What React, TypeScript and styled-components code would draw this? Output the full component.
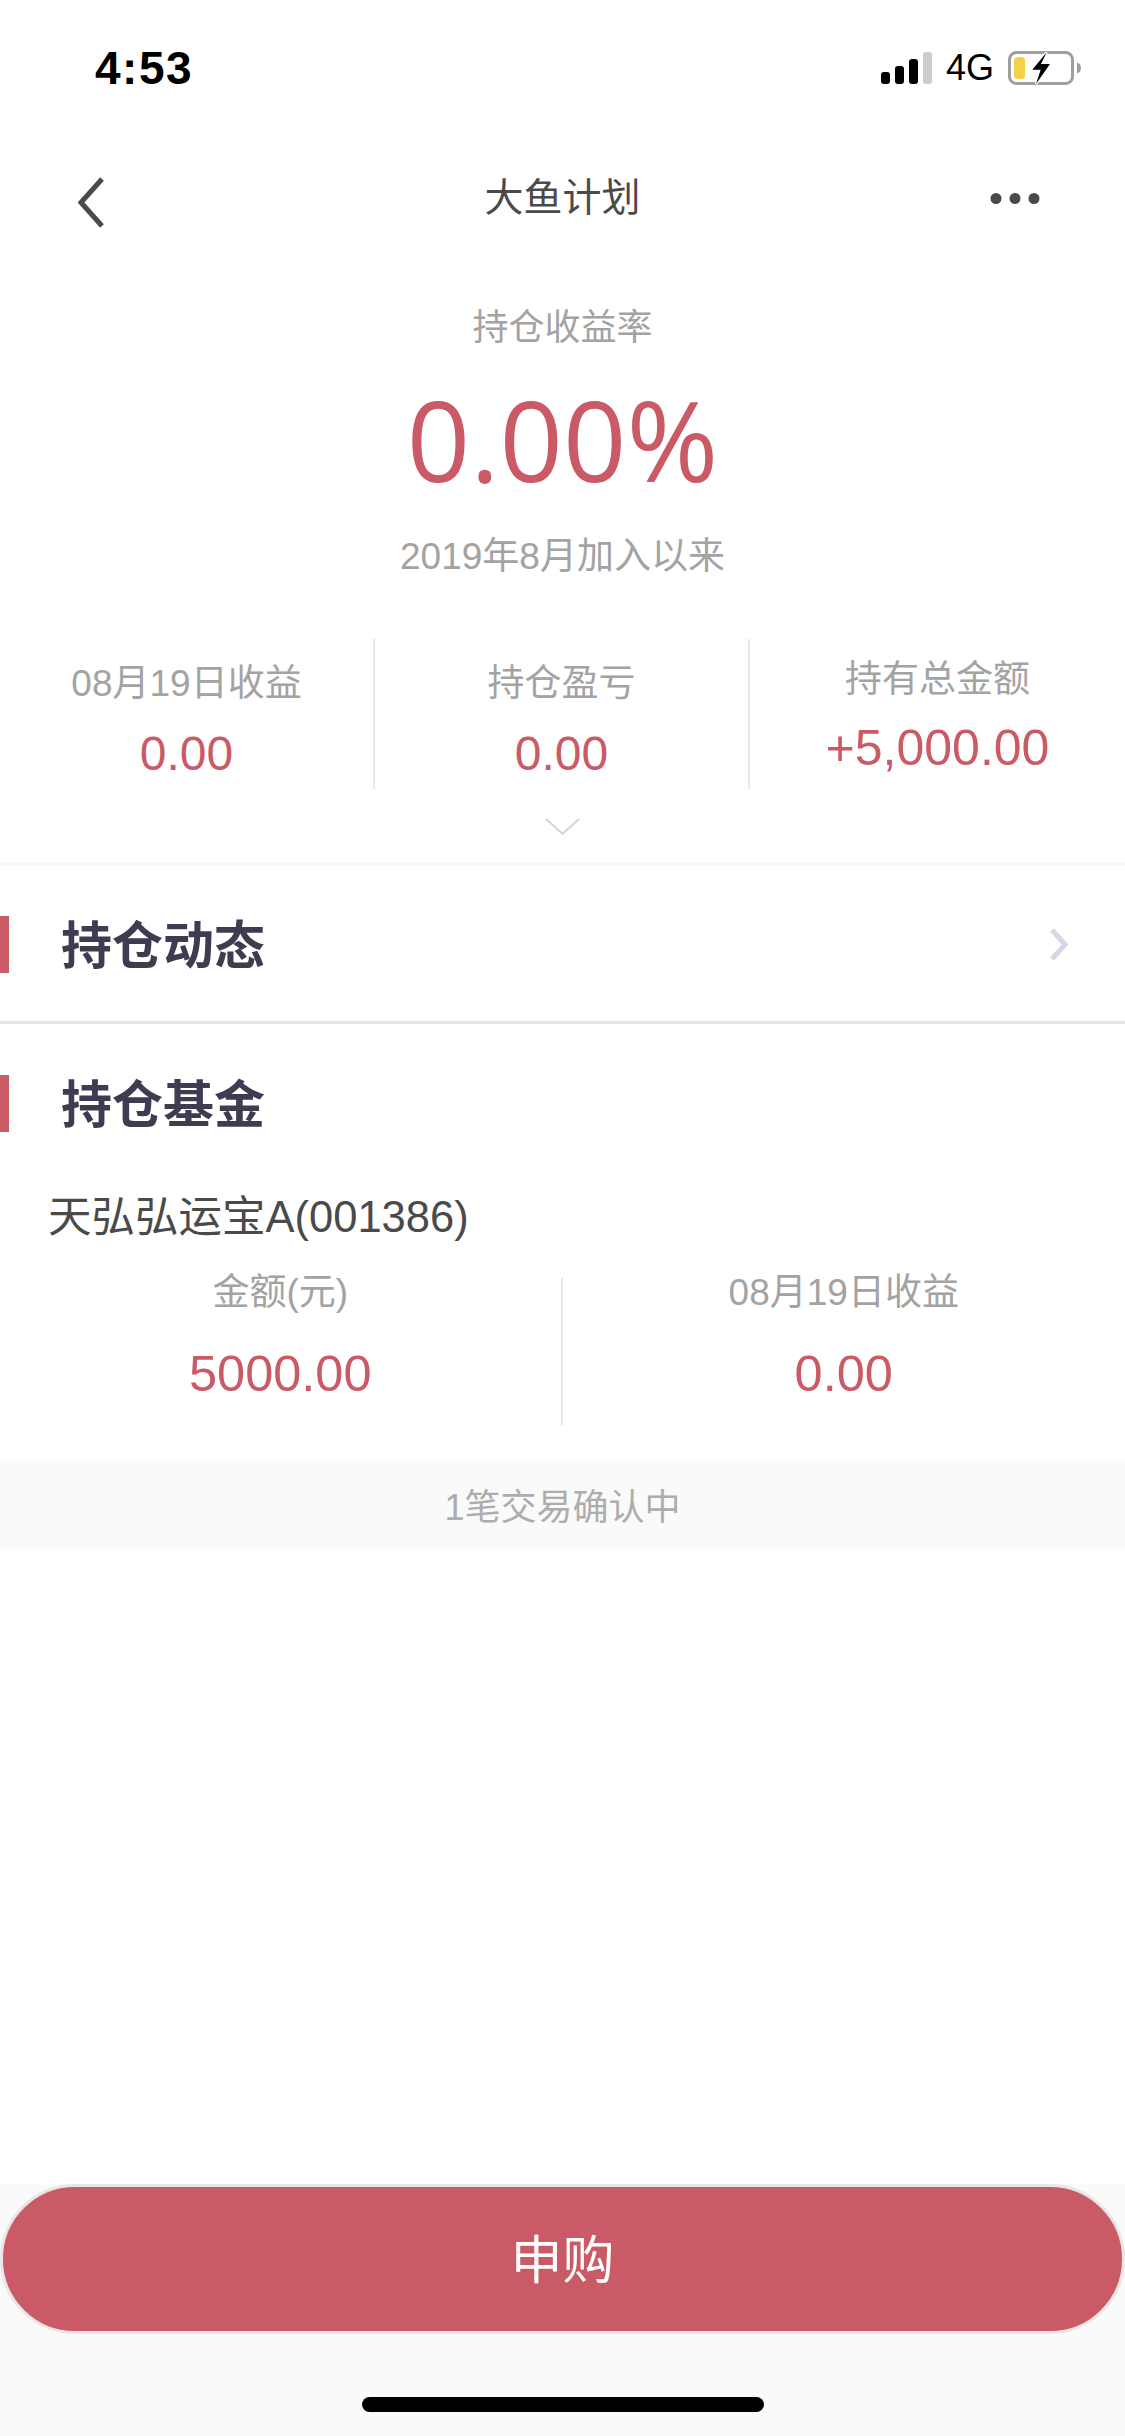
import React from 'react';
import styled, { createGlobalStyle } from 'styled-components';

const GlobalStyle = createGlobalStyle`
  html, body {
    margin: 0;
    padding: 0;
    background: #fff;
  }
  * {
    box-sizing: border-box;
  }
`;

const SANS = '"Liberation Sans", "Noto Sans CJK SC", sans-serif';
const RED = '#c95a66';

const Page = styled.div`
  width: 1125px;
  height: 2436px;
  display: flex;
  flex-direction: column;
  background: #fff;
  font-family: ${SANS};
  overflow: hidden;
`;

const StatusBar = styled.div`
  height: 110px;
  padding: 48px 44px 22px 95px;
  display: flex;
  justify-content: space-between;
  align-items: center;
`;

const Clock = styled.span`
  font-size: 46px;
  line-height: 40px;
  font-weight: 700;
  letter-spacing: 1.5px;
  color: #000;
`;

const StatusIcons = styled.div`
  display: flex;
  align-items: center;
  gap: 14px;
`;

const NetworkLabel = styled.span`
  font-size: 36px;
  line-height: 40px;
  color: #000;
`;

const NavBar = styled.div`
  height: 180px;
  padding: 0 85px;
  display: grid;
  grid-template-columns: 1fr auto 1fr;
  align-items: center;
`;

const NavTitle = styled.span`
  font-size: 39px;
  line-height: 44px;
  padding-bottom: 5px;
  color: #4a4a4a;
`;

const NavEnd = styled.div`
  display: flex;
  justify-content: flex-end;
  padding-bottom: 3px;
`;

const BackGlyph = styled.svg`
  display: block;
  margin: 5px 0 0 -8px;
`;

const Hero = styled.div`
  display: flex;
  flex-direction: column;
  align-items: center;
`;

const HeroLabel = styled.div`
  font-size: 36px;
  line-height: 76px;
  color: #a3a3a3;
`;

const HeroValue = styled.div`
  font-family: "Open Sans", ${SANS};
  font-size: 111px;
  line-height: 146px;
  color: ${RED};
`;

const HeroNote = styled.div`
  font-size: 37px;
  line-height: 90px;
  color: #a3a3a3;
`;

const StatGrid = styled.div<{ $columns: number }>`
  display: grid;
  grid-template-columns: repeat(${props => props.$columns}, 1fr);
`;

const Stats = styled(StatGrid)`
  margin-top: 37px;
  height: 150px;
`;

const FundStats = styled(StatGrid)`
  margin-top: 24px;
  height: 147px;
`;

const StatCell = styled.div<{ $top: number; $rule?: boolean }>`
  display: flex;
  flex-direction: column;
  align-items: center;
  padding-top: ${props => props.$top}px;
  border-right: ${props => (props.$rule ? '2px solid #e8e8e8' : 'none')};
`;

const StatLabel = styled.div<{ $height: number }>`
  font-size: 37px;
  line-height: ${props => props.$height}px;
  color: #a3a3a3;
  white-space: nowrap;
`;

const StatValue = styled.div<{ $gap: number; $size: number }>`
  font-size: ${props => props.$size}px;
  line-height: 60px;
  margin-top: ${props => props.$gap}px;
  color: ${RED};
  white-space: nowrap;
`;

const Expand = styled.div`
  height: 76px;
  padding-top: 29px;
  display: flex;
  justify-content: center;
  align-items: flex-start;
  border-bottom: 2px solid #f6f6f6;
`;

const SectionRow = styled.div<{ $ruled?: boolean }>`
  height: ${props => (props.$ruled ? 159 : 156)}px;
  display: flex;
  align-items: center;
  padding: 2px 57px 0 0;
  border-bottom: ${props => (props.$ruled ? '3px solid #e4e4ec' : 'none')};
`;

const SectionMark = styled.span`
  width: 9px;
  height: 57px;
  background: ${RED};
`;

const SectionTitle = styled.h2`
  flex: 1;
  margin: 0 0 0 52px;
  padding-top: 6px;
  font-size: 51px;
  line-height: 60px;
  font-weight: 700;
  color: #3f3c52;
`;

const FundName = styled.div`
  padding-left: 48px;
  font-size: 43.500px;
  line-height: 74px;
  color: #4a4a4a;
`;

const PendingBanner = styled.div`
  margin-top: 36px;
  height: 90px;
  padding-bottom: 5px;
  display: flex;
  align-items: center;
  justify-content: center;
  background: #fafafa;
  font-size: 36px;
  color: #adadad;
`;

const Spacer = styled.div`
  flex: 1;
`;

const Footer = styled.div`
  height: 252px;
  display: flex;
  flex-direction: column;
  align-items: center;
  background: #fafafa;
`;

const BuyButton = styled.button`
  width: 1125px;
  height: 150px;
  padding: 0 0 6px;
  border: 3px solid #e8e6e6;
  border-radius: 75px;
  background: ${RED};
  font-family: ${SANS};
  font-size: 52px;
  color: #fff;
`;

const HomeIndicator = styled.div`
  width: 402px;
  height: 15px;
  margin-top: 63px;
  border-radius: 8px;
  background: #000;
`;

const SignalIcon = () => (
  <svg width="51" height="32" viewBox="0 0 51 32">
    <rect x="0" y="20" width="9" height="12" rx="3" fill="#000" />
    <rect x="14" y="14" width="9" height="18" rx="3" fill="#000" />
    <rect x="28" y="7" width="9" height="25" rx="3" fill="#000" />
    <rect x="42" y="0" width="9" height="32" rx="3" fill="#ccc" />
  </svg>
);

const BatteryIcon = () => (
  <svg width="73" height="34" viewBox="0 0 73 34">
    <rect x="1.500" y="1.500" width="63" height="31" rx="7" fill="none" stroke="#9e9e9e" strokeWidth="3" />
    <path d="M69 11.500c2.500 .8 4 3 4 5.500s-1.500 4.700-4 5.500z" fill="#9e9e9e" />
    <rect x="6" y="6" width="11" height="22" rx="3.500" fill="#f8d048" />
    <path
      d="M38.700 1.300L24.300 18.700H32.700L28 33L42 13H33Z"
      fill="#000"
      stroke="#fff"
      strokeWidth="2.500"
      paintOrder="stroke"
    />
  </svg>
);

const BackIcon = () => (
  <BackGlyph width="29" height="53" viewBox="0 0 29 53">
    <path d="M25 3L4 26.500 25 50" fill="none" stroke="#4a4a4a" strokeWidth="5" />
  </BackGlyph>
);

const MoreIcon = () => (
  <svg width="50" height="13" viewBox="0 0 50 13">
    <circle cx="6" cy="6.500" r="5.500" fill="#4a4a4a" />
    <circle cx="25" cy="6.500" r="5.500" fill="#4a4a4a" />
    <circle cx="44" cy="6.500" r="5.500" fill="#4a4a4a" />
  </svg>
);

const ExpandIcon = () => (
  <svg width="35" height="18" viewBox="0 0 35 18">
    <path d="M1 1l16.500 15L34 1" fill="none" stroke="#d4d4d4" strokeWidth="2" />
  </svg>
);

const ForwardIcon = () => (
  <svg width="19" height="33" viewBox="0 0 19 33">
    <path d="M3 2l13 14.500L3 31" fill="none" stroke="#d6d6e8" strokeWidth="5" />
  </svg>
);

const summary = [
  { label: '08月19日收益', value: '0.00', top: 20, gap: 15, size: 48 },
  { label: '持仓盈亏', value: '0.00', top: 20, gap: 15, size: 48 },
  { label: '持有总金额', value: '+5,000.00', top: 16, gap: 13, size: 50 },
];

const fund = [
  { label: '金额(元)', value: '5000.00' },
  { label: '08月19日收益', value: '0.00' },
];

export default function App() {
  return (
    <Page>
      <GlobalStyle />
      <StatusBar>
        <Clock>4:53</Clock>
        <StatusIcons>
          <SignalIcon />
          <NetworkLabel>4G</NetworkLabel>
          <BatteryIcon />
        </StatusIcons>
      </StatusBar>
      <NavBar>
        <BackIcon />
        <NavTitle>大鱼计划</NavTitle>
        <NavEnd>
          <MoreIcon />
        </NavEnd>
      </NavBar>
      <Hero>
        <HeroLabel>持仓收益率</HeroLabel>
        <HeroValue>0.00%</HeroValue>
        <HeroNote>2019年8月加入以来</HeroNote>
      </Hero>
      <Stats $columns={3}>
        {summary.map((item, i) => (
          <StatCell key={item.label} $top={item.top} $rule={i < 2}>
            <StatLabel $height={50}>{item.label}</StatLabel>
            <StatValue $gap={item.gap} $size={item.size}>{item.value}</StatValue>
          </StatCell>
        ))}
      </Stats>
      <Expand>
        <ExpandIcon />
      </Expand>
      <SectionRow $ruled>
        <SectionMark />
        <SectionTitle>持仓动态</SectionTitle>
        <ForwardIcon />
      </SectionRow>
      <SectionRow>
        <SectionMark />
        <SectionTitle>持仓基金</SectionTitle>
      </SectionRow>
      <FundName>天弘弘运宝A(001386)</FundName>
      <FundStats $columns={2}>
        {fund.map((item, i) => (
          <StatCell key={item.label} $top={1} $rule={i === 0}>
            <StatLabel $height={28}>{item.label}</StatLabel>
            <StatValue $gap={37} $size={50.500}>{item.value}</StatValue>
          </StatCell>
        ))}
      </FundStats>
      <PendingBanner>1笔交易确认中</PendingBanner>
      <Spacer />
      <Footer>
        <BuyButton>申购</BuyButton>
        <HomeIndicator />
      </Footer>
    </Page>
  );
}
